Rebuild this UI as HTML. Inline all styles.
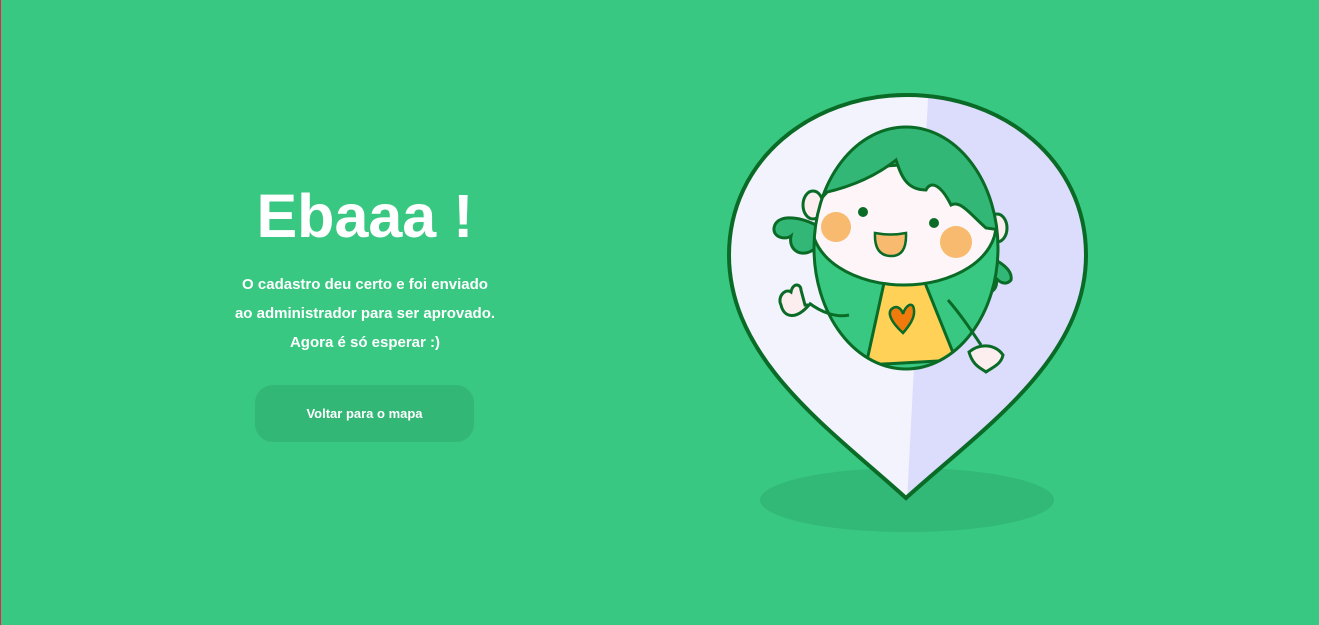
<!DOCTYPE html>
<html><head><meta charset="utf-8"><style>
html,body{margin:0;padding:0}
body{width:1319px;height:625px;background:#39C882;position:relative;overflow:hidden;font-family:"Liberation Sans",sans-serif;color:#fff;border-left:1px solid #E8244E;box-sizing:border-box}
h1{position:absolute;left:164px;width:400px;top:178px;margin:0;text-align:center;font-size:61px;font-weight:bold;line-height:76px}
.p{position:absolute;left:164px;width:400px;top:270px;text-align:center;font-size:15px;font-weight:bold;line-height:29px}
.btn{position:absolute;left:254px;top:385px;width:219px;height:57px;border-radius:18px;background:#33B777;text-align:center;line-height:57px;font-size:13px;font-weight:bold}
svg{position:absolute;left:0;top:0}
</style></head><body>
<h1>Ebaaa !</h1>
<div class="p">O cadastro deu certo e foi enviado<br>ao administrador para ser aprovado.<br>Agora é só esperar :)</div>
<div class="btn">Voltar para o mapa</div>
<svg width="1319" height="625" viewBox="0 0 1319 625">
<defs><clipPath id="pin"><path d="M905 498 C830 430 728 360 728 255 C728 160 810 95 906 95 C1002 95 1085 160 1085 255 C1085 360 980 430 905 498Z"/></clipPath>
<clipPath id="body"><ellipse cx="905" cy="248" rx="92" ry="121"/></clipPath></defs>
<ellipse cx="906" cy="500" rx="147" ry="32" fill="#32B877"/>
<g clip-path="url(#pin)">
<rect x="700" y="80" width="420" height="440" fill="#F3F3FE"/>
<path d="M928 80 L1120 80 L1120 520 L905 520 Z" fill="#DCDCFD"/>
</g>
<path d="M905 498 C830 430 728 360 728 255 C728 160 810 95 906 95 C1002 95 1085 160 1085 255 C1085 360 980 430 905 498Z" fill="none" stroke="#0A6B27" stroke-width="4"/>
<path d="M815 225 C795 215 775 215 773 228 C772 238 785 240 790 236 C787 250 800 258 812 250 C820 262 832 252 820 240Z" fill="#33B777" stroke="#0A6B27" stroke-width="3"/>
<path d="M985 255 C1000 262 1012 270 1010 280 C1005 286 998 282 995 278 C998 290 988 296 980 290 C975 298 965 292 970 280Z" fill="#33B777" stroke="#0A6B27" stroke-width="3"/>
<ellipse cx="812" cy="205" rx="10" ry="14" fill="#FCEDEF" stroke="#0A6B27" stroke-width="3"/>
<ellipse cx="996" cy="228" rx="10" ry="14" fill="#FCEDEF" stroke="#0A6B27" stroke-width="3"/>
<g clip-path="url(#body)">
<rect x="800" y="120" width="210" height="260" fill="#39C882"/>
<path d="M883 283 L924 283 L955 360 L865 365Z" fill="#FFD157" stroke="#0A6B27" stroke-width="3"/>
<ellipse cx="903" cy="225" rx="92" ry="60" fill="#FDF5F7" stroke="#0A6B27" stroke-width="3"/>
<path d="M812 195 C840 190 870 180 895 160 C900 175 905 190 925 190 C930 180 940 185 950 205 C960 200 970 215 985 228 L1000 230 L1000 120 L810 120Z" fill="#33B777" stroke="#0A6B27" stroke-width="3"/>
</g>
<ellipse cx="905" cy="248" rx="92" ry="121" fill="none" stroke="#0A6B27" stroke-width="3"/>
<circle cx="835" cy="227" r="15" fill="#F7BA6E"/>
<circle cx="955" cy="242" r="16" fill="#F7BA6E"/>
<circle cx="862" cy="212" r="5" fill="#0A6B27"/>
<circle cx="933" cy="223" r="5" fill="#0A6B27"/>
<path d="M874 233 Q890 236 905 233 Q906 257 889 256 Q873 255 874 233Z" fill="#F7BA6E" stroke="#0A6B27" stroke-width="2.5"/>
<path d="M902 333 C890 322 885 312 892 308 C897 305 901 310 902 314 C904 306 912 300 913 310 C914 318 908 326 902 333Z" fill="#F07A0B" stroke="#0A6B27" stroke-width="2.5"/>
<path d="M808 303 C820 312 835 318 848 315" fill="none" stroke="#0A6B27" stroke-width="3"/>
<path d="M808 305 C795 320 783 318 780 305 C776 297 784 288 790 292 C792 282 800 284 800 290 L804 305Z" fill="#FCEDEF" stroke="#0A6B27" stroke-width="3"/>
<path d="M947 300 C960 315 970 330 980 345" fill="none" stroke="#0A6B27" stroke-width="3"/>
<path d="M968 352 C980 342 995 345 1002 355 C1000 365 990 368 985 372 C980 368 972 366 968 352Z" fill="#FCEDEF" stroke="#0A6B27" stroke-width="3"/>
</svg>
</body></html>
